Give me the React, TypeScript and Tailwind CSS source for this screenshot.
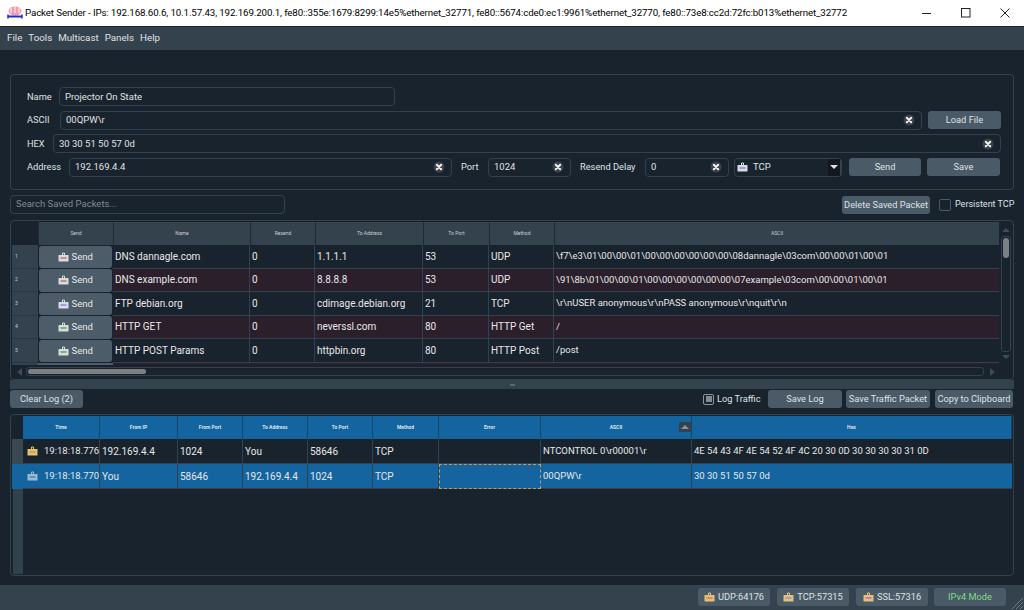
import type { ReactNode } from "react";

const font = { fontFamily: 'Roboto, "Noto Sans", sans-serif' };

const packets = [
  { name: "DNS dannagle.com", resend: "0", to: "1.1.1.1", port: "53", method: "UDP", ascii: "\\f7\\e3\\01\\00\\00\\01\\00\\00\\00\\00\\00\\00\\08dannagle\\03com\\00\\00\\01\\00\\01", icon: "#d98a80" },
  { name: "DNS example.com", resend: "0", to: "8.8.8.8", port: "53", method: "UDP", ascii: "\\91\\8b\\01\\00\\00\\01\\00\\00\\00\\00\\00\\00\\07example\\03com\\00\\00\\01\\00\\01", icon: "#d98a80" },
  { name: "FTP debian.org", resend: "0", to: "cdimage.debian.org", port: "21", method: "TCP", ascii: "\\r\\nUSER anonymous\\r\\nPASS anonymous\\r\\nquit\\r\\n", icon: "#a79ae0" },
  { name: "HTTP GET", resend: "0", to: "neverssl.com", port: "80", method: "HTTP Get", ascii: "/", icon: "#7cb56e" },
  { name: "HTTP POST Params", resend: "0", to: "httpbin.org", port: "80", method: "HTTP Post", ascii: "/post", icon: "#7cb56e" },
];

const logRows = [
  { time: "19:18:18.776", from: "192.169.4.4", fromPort: "1024", to: "You", toPort: "58646", method: "TCP", ascii: "NTCONTROL 0\\r00001\\r", hex: "4E 54 43 4F 4E 54 52 4F 4C 20 30 0D 30 30 30 30 31 0D" },
  { time: "19:18:18.770", from: "You", fromPort: "58646", to: "192.169.4.4", toPort: "1024", method: "TCP", ascii: "00QPW\\r", hex: "30 30 51 50 57 0d" },
];

function PacketIcon({ body = "#d8dde2", mark = "#d98a80" }: { body?: string; mark?: string }) {
  return (
    <svg width="11" height="10" viewBox="0 0 11 10" className="shrink-0">
      <path d="M4.5 3V1h2v2" fill="none" stroke={body} strokeWidth="1" />
      <rect x="0.5" y="3" width="10" height="6.5" rx="0.5" fill={body} />
      <rect x="2.5" y="5" width="6" height="2" fill={mark} />
    </svg>
  );
}

function ClearIcon() {
  return (
    <svg width="12" height="12" viewBox="0 0 12 12" className="shrink-0">
      <circle cx="6" cy="6" r="5.5" fill="#3b4349" />
      <path d="M3.8 3.8l4.4 4.4M8.2 3.8l-4.4 4.4" stroke="#f0f0f0" strokeWidth="2" strokeLinecap="round" />
    </svg>
  );
}

function Field({ value, width, clear = true }: { value: string; width: string; clear?: boolean }) {
  return (
    <div className={`${width} h-[19px] rounded-[4px] border border-[#32414b] flex items-center justify-between pl-[5px] pr-[6px] text-[9.5px] text-[#e0e1e3]`}>
      <span className="whitespace-nowrap pt-[1px]">{value}</span>
      {clear && <ClearIcon />}
    </div>
  );
}

function Btn({ children, width, className = "" }: { children: ReactNode; width: string; className?: string }) {
  return (
    <div className={`${width} h-[18px] shrink-0 rounded-[3px] bg-[#4a5a67] flex items-center justify-center text-[9.25px] text-[#dfe2e5] whitespace-nowrap ${className}`}>
      {children}
    </div>
  );
}

function Label({ children, width }: { children: ReactNode; width: string }) {
  return <div className={`${width} shrink-0 text-[9.25px] text-[#dfe2e5] whitespace-nowrap`}>{children}</div>;
}

function Arrow({ d }: { d: string }) {
  return (
    <svg width="10" height="6" viewBox="0 0 10 6" className="shrink-0 overflow-visible">
      <path d={d} fill="#3c4c59" />
    </svg>
  );
}

function PacketTable() {
  const head = ["Send", "Name", "Resend", "To Address", "To Port", "Method", "ASCII"];
  return (
    <div className="mt-[6px] h-[160px] rounded-[4px] border border-[#32414b] flex flex-col p-[1px] overflow-hidden">
      <div className="flex h-[143px]">
        <div className="w-[987px] overflow-hidden">
          <div className="grid grid-cols-[26px_75px_137px_65px_108px_66px_65px_445px] h-[23px] bg-[#34424e]">
            <div className="bg-[#19232d]" />
            {head.map((h) => (
              <div key={h} className="flex items-center justify-center border-l border-[#1e2a34] text-[5px] text-[#c9ced2]">
                {h}
              </div>
            ))}
          </div>
          {packets.map((p, i) => (
            <div key={p.name} className={`grid grid-cols-[26px_75px_137px_65px_108px_66px_65px_445px] h-[23.5px] items-stretch text-[10px] text-[#e6e8ea] whitespace-nowrap ${i % 2 ? "bg-[#2b1f2b]" : "bg-[#19232d]"}`}>
              <div className="bg-[#33424e] border-b border-[#2a3742] flex items-center pl-[3px] text-[5px] text-[#c9ced2]">{i + 1}</div>
              <div className="p-[0.5px] pr-[1px] bg-[#19232d]">
                <div className="h-full rounded-[3px] bg-[#4c5c68] flex items-center justify-center gap-[3px] text-[9.5px] text-[#e6e8ea]">
                  <PacketIcon mark={p.icon} />
                  Send
                </div>
              </div>
              <div className="border-r border-b border-[#32414b] flex items-center pl-[2px]">{p.name}</div>
              <div className="border-r border-b border-[#32414b] flex items-center pl-[2px]">{p.resend}</div>
              <div className="border-r border-b border-[#32414b] flex items-center pl-[2px]">{p.to}</div>
              <div className="border-r border-b border-[#32414b] flex items-center pl-[2px]">{p.port}</div>
              <div className="border-r border-b border-[#32414b] flex items-center pl-[2px]">{p.method}</div>
              <div className="border-b border-[#32414b] flex items-center pl-[2px] text-[9.5px]">{p.ascii}</div>
            </div>
          ))}
          <div className="grid grid-cols-[26px_75px_137px_65px_108px_66px_65px_445px] h-[4px] bg-[#2b1f2b]">
            <div className="bg-[#33424e]" />
            <div className="bg-[#4c5c68]" />
          </div>
        </div>
        <div className="w-[12px] ml-[1px] flex flex-col items-center pt-[6px]">
          <Arrow d="M5 0l4 4H1z" />
          <div className="mt-[2px] h-[116px] w-[10px] rounded-[3px] border border-[#32414b] p-[1px]">
            <div className="h-[20px] rounded-[3px] bg-[#7b8084]" />
          </div>
          <div className="mt-[3px]">
            <Arrow d="M1 0h8L5 4z" />
          </div>
        </div>
      </div>
      <div className="flex items-center h-[13px] pl-[5px] gap-[4px]">
        <svg width="5" height="8" viewBox="0 0 5 8" className="shrink-0">
          <path d="M5 0v8L0 4z" fill="#3c4c59" />
        </svg>
        <div className="w-[958px] h-[9px] rounded-[3px] border border-[#32414b] p-[1px]">
          <div className="w-[118px] h-full rounded-[3px] bg-[#7b8084]" />
        </div>
        <svg width="5" height="8" viewBox="0 0 5 8" className="ml-[2px] shrink-0">
          <path d="M0 0v8l5-4z" fill="#3c4c59" />
        </svg>
      </div>
    </div>
  );
}

function LogTable() {
  const head = ["Time", "From IP", "From Port", "To Address", "To Port", "Method", "Error", "ASCII", "Hex"];
  return (
    <div className="mt-[6px] h-[162px] rounded-[4px] border border-[#32414b] p-[1px] flex flex-col">
      <div className="grid grid-cols-[11px_77px_78px_65px_65px_65px_66px_102px_151px_320px] h-[23px]">
        <div className="bg-[#19232d]" />
        {head.map((h) => (
          <div key={h} className="relative flex items-center justify-center bg-[#1464a0] border-r border-[#19232d]/50 text-[5px] font-bold text-[#d8e4ee]">
            {h}
            {h === "ASCII" && (
              <div className="absolute right-0 top-[6px] w-[12px] h-[10px] bg-[#34424e] flex items-center justify-center">
                <svg width="8" height="4" viewBox="0 0 8 4">
                  <path d="M4 0l4 4H0z" fill="#8a949c" />
                </svg>
              </div>
            )}
          </div>
        ))}
      </div>
      {logRows.map((r, i) => (
        <div key={r.time} className={`grid grid-cols-[11px_77px_78px_65px_65px_65px_66px_102px_151px_320px] h-[25px] text-[10px] text-[#e6e8ea] whitespace-nowrap ${i ? "bg-[#1464a0]" : "bg-[#19232d]"}`}>
          <div className={i ? "bg-[#1464a0]" : "bg-[#3a4853]"} />
          <div className="border-r border-b border-[#32414b] flex items-center gap-[6px] pl-[4px] text-[9.5px]">
            {i ? <PacketIcon body="#9db9d2" mark="#5c93c4" /> : <PacketIcon body="#e3c271" mark="#c9a555" />}
            {r.time}
          </div>
          <div className="border-r border-b border-[#32414b] flex items-center pl-[2px]">{r.from}</div>
          <div className="border-r border-b border-[#32414b] flex items-center pl-[2px]">{r.fromPort}</div>
          <div className="border-r border-b border-[#32414b] flex items-center pl-[2px]">{r.to}</div>
          <div className="border-r border-b border-[#32414b] flex items-center pl-[2px]">{r.toPort}</div>
          <div className="border-r border-b border-[#32414b] flex items-center pl-[2px]">{r.method}</div>
          <div className={i ? "border border-dashed border-[#c79a62]" : "border-r border-b border-[#32414b]"} />
          <div className="border-r border-b border-[#32414b] flex items-center pl-[2px] text-[9.5px]">{r.ascii}</div>
          <div className="border-b border-[#32414b] flex items-center pl-[2px] text-[9.5px]">{r.hex}</div>
        </div>
      ))}
      <div className="flex-1 w-[10px] ml-[1px] bg-[#32414b]" />
    </div>
  );
}

function StatusPill({ children, width }: { children: ReactNode; width: string }) {
  return (
    <div className={`${width} h-[18px] rounded-[3px] bg-[#4a5a67] flex items-center justify-center gap-[3px] text-[9.25px] text-[#dfe2e5]`}>
      {children}
    </div>
  );
}

export default function App() {
  return (
    <div style={font} className="w-[1024px] h-[610px] bg-[#19232d] flex flex-col overflow-hidden">
      <div className="h-[27px] shrink-0 bg-white border-b border-[#222] flex items-center text-[9.75px] tracking-[-0.13px] text-black">
        <svg width="16" height="14" viewBox="0 0 16 14" className="ml-[7px] shrink-0">
          <ellipse cx="8" cy="5" rx="6.5" ry="4.5" fill="#f29ab0" />
          <path d="M4 2v5M8 1v6M12 2v5" stroke="#fff" strokeWidth="1" />
          <path d="M1 10.5h14" stroke="#1c2fc4" strokeWidth="2" />
          <path d="M1 8.5v4M15 8.5v4" stroke="#1c2fc4" strokeWidth="1.5" />
        </svg>
        <span className="ml-[2px] whitespace-nowrap">
          Packet Sender - IPs: 192.168.60.6, 10.1.57.43, 192.169.200.1, fe80::355e:1679:8299:14e5%ethernet_32771, fe80::5674:cde0:ec1:9961%ethernet_32770, fe80::73e8:cc2d:72fc:b013%ethernet_32772
        </span>
        <div className="ml-auto flex items-center gap-[29px] pr-[14px]">
          <svg width="10" height="10" viewBox="0 0 10 10"><path d="M0 5.5h9" stroke="#222" strokeWidth="1" /></svg>
          <svg width="10" height="10" viewBox="0 0 10 10"><rect x="0.5" y="0.5" width="8.5" height="8.5" fill="none" stroke="#222" /></svg>
          <svg width="10" height="10" viewBox="0 0 10 10"><path d="M0.5 0.5l9 9M9.5 0.5l-9 9" stroke="#222" strokeWidth="1" /></svg>
        </div>
      </div>

      <div className="h-[23px] shrink-0 bg-[#34424e] flex items-center gap-[6px] pl-[7px] text-[9.75px] text-[#e0e1e3]">
        {["File", "Tools", "Multicast", "Panels", "Help"].map((m) => (
          <span key={m}>{m}</span>
        ))}
      </div>

      <div className="flex-1 pl-[10px] pr-[10px] flex flex-col">
        <div className="mt-[24px] h-[116px] rounded-[4px] border border-[#32414b] pl-[16px] pr-[12px] pt-[12px] flex flex-col gap-[4.5px]">
          <div className="flex items-center">
            <Label width="w-[32px]">Name</Label>
            <Field value="Projector On State" width="w-[336px]" clear={false} />
          </div>
          <div className="flex items-center">
            <Label width="w-[33px]">ASCII</Label>
            <Field value="00QPW\r" width="flex-1" />
            <Btn width="w-[73px]" className="ml-[6px]">Load File</Btn>
          </div>
          <div className="flex items-center">
            <Label width="w-[26px]">HEX</Label>
            <Field value="30 30 51 50 57 0d" width="flex-1" />
          </div>
          <div className="flex items-center">
            <Label width="w-[42px]">Address</Label>
            <Field value="192.169.4.4" width="w-[383px]" />
            <Label width="w-[27px] ml-[9px]">Port</Label>
            <Field value="1024" width="w-[83px]" />
            <Label width="w-[65px] ml-[9px]">Resend Delay</Label>
            <Field value="0" width="w-[84px]" />
            <div className="ml-[5px] w-[108px] h-[19px] rounded-[4px] border border-[#32414b] flex items-center pl-[2px] text-[9.5px] text-[#e0e1e3]">
              <PacketIcon mark="#a79ae0" />
              <span className="ml-[5px]">TCP</span>
              <div className="ml-auto w-[13px] h-full flex items-center justify-center bg-[#11181f] border-r border-[#34424e]">
                <svg width="8" height="4" viewBox="0 0 8 4"><path d="M0 0h8L4 4z" fill="#e0e1e3" /></svg>
              </div>
            </div>
            <Btn width="w-[72px]" className="ml-[7px]">Send</Btn>
            <Btn width="w-[73px]" className="ml-[6px]">Save</Btn>
          </div>
        </div>

        <div className="mt-[5px] h-[19px] flex items-center">
          <div className="w-[275px] h-[19px] rounded-[4px] border border-[#32414b] flex items-center pl-[5px] text-[9.5px] text-[#7f8a93]">
            Search Saved Packets...
          </div>
          <Btn width="w-[88px]" className="ml-auto">Delete Saved Packet</Btn>
          <div className="ml-[9px] w-[12px] h-[12px] rounded-[2px] border border-[#4a5a67]" />
          <div className="w-[58px] ml-[4px] mr-[1px] shrink-0 text-[9px] text-[#dfe2e5] whitespace-nowrap">Persistent TCP</div>
        </div>

        <PacketTable />

        <div className="h-[9px] bg-[#34424e] flex items-center justify-center">
          <div className="w-[5px] h-[2px] bg-[#5a6873]" />
        </div>

        <div className="mt-[1px] h-[18px] flex items-center">
          <Btn width="w-[73px]">Clear Log (2)</Btn>
          <div className="ml-auto w-[11px] h-[11px] rounded-[2px] border border-[#8a949c] p-[1.5px]">
            <div className="w-full h-full bg-[#7f8a93]" />
          </div>
          <Label width="w-[46px] ml-[3px]">Log Traffic</Label>
          <Btn width="w-[74px]" className="ml-[5px]">Save Log</Btn>
          <Btn width="w-[84px]" className="ml-[4px]">Save Traffic Packet</Btn>
          <Btn width="w-[78px]" className="ml-[5px] mr-[1px]">Copy to Clipboard</Btn>
        </div>

        <LogTable />
      </div>

      <div className="h-[25px] shrink-0 bg-[#34424e] flex items-start pt-[3px] pl-[698px]">
        <div className="flex gap-[7px]">
          <StatusPill width="w-[72px]"><PacketIcon body="#e3c271" mark="#d98a80" />UDP:64176</StatusPill>
          <StatusPill width="w-[72px]"><PacketIcon body="#e3c271" mark="#a79ae0" />TCP:57315</StatusPill>
          <StatusPill width="w-[72px]"><PacketIcon body="#e3c271" mark="#d070d0" />SSL:57316</StatusPill>
        </div>
        <div className="ml-[6px] w-[72px] h-[18px] rounded-[3px] bg-[#4a5a67] flex items-center justify-center text-[9.25px] text-[#7ddc84]">IPv4 Mode</div>
        <svg width="12" height="12" viewBox="0 0 12 12" className="ml-[5px] mt-[9px] shrink-0">
          <path d="M12 1L1 12M12 5l-7 7M12 9l-3 3" stroke="#6b7a85" strokeWidth="1" />
        </svg>
      </div>
    </div>
  );
}
